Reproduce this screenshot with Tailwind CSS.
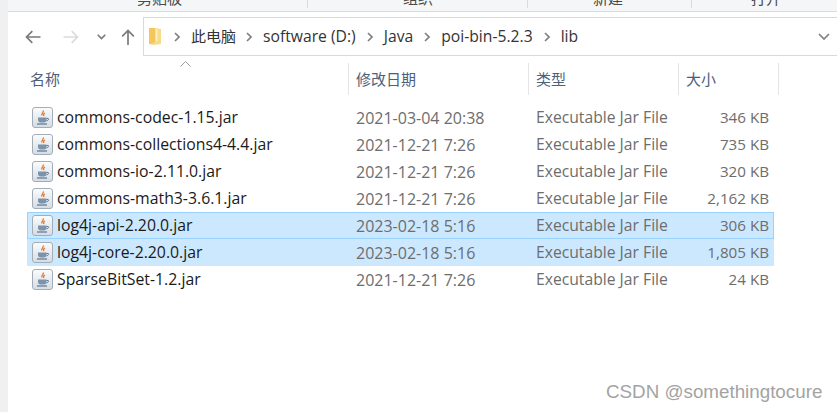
<!DOCTYPE html>
<html lang="en">

<head>
    <meta charset="UTF-8" />
    <title>lib</title>
    <script src="https://cdn.jsdelivr.net/npm/@tailwindcss/browser@4"></script>
</head>

<body class="relative w-[837px] h-[412px] overflow-hidden bg-white flex font-['Open_Sans','Noto_Sans_CJK_SC',sans-serif]">
    <svg width="0" height="0" class="absolute">
        <defs>
            <linearGradient id="jarBg" x1="0" y1="0" x2="0" y2="1">
                <stop offset="0" stop-color="#fbfcfd" />
                <stop offset="1" stop-color="#d5dce4" />
            </linearGradient>
            <symbol id="jar" viewBox="0 0 21 21">
                <rect x="0.5" y="0.5" width="20" height="20" rx="2.5" fill="url(#jarBg)" stroke="#a3adb8" />
                <path d="M11 3.5c1.5 1.8-2.200 2.800-1 5M13 6c-1.600.9-1.800 1.800-1 3" fill="none" stroke="#e2762a" stroke-width="1.300" />
                <path d="M6 10.500h8.500v2.500c0 1.500-1.200 2.500-2.500 2.500h-3.500c-1.500 0-2.500-1-2.500-2.500z" fill="#7d93aa" />
                <path d="M14.500 11.500h1.500c.9 0 .9 2-1.500 2.300" fill="none" stroke="#5b7591" />
                <path d="M5 17h10" stroke="#5b7591" stroke-width="1.200" />
            </symbol>
        </defs>
    </svg>

    <!-- left edge of the window -->
    <div class="w-[8px] shrink-0 bg-[#f0f0f0]"></div>

    <div class="flex-1 flex flex-col min-w-0">
        <!-- ribbon, cut off at the top -->
        <div class="h-[12px] shrink-0 bg-[#f5f6f7] border-b border-[#dadbdc] flex text-[15px] leading-[15px] text-[#4a4a4a] overflow-hidden">
            <div class="w-[300px] h-[8px] border-r border-[#dadbdc] overflow-hidden"><span class="block -mt-[9px] ml-[129px]">剪贴板</span></div>
            <div class="w-[220px] h-[8px] border-r border-[#dadbdc] overflow-hidden"><span class="block -mt-[9px] ml-[95px]">组织</span></div>
            <div class="w-[164px] h-[8px] border-r border-[#dadbdc] overflow-hidden"><span class="block -mt-[9px] ml-[65px]">新建</span></div>
            <div class="w-[145px] h-[8px] overflow-hidden"><span class="block -mt-[9px] ml-[59px]">打开</span></div>
        </div>

        <!-- navigation and address bar -->
        <div class="h-[44px] shrink-0 flex items-center pt-[5px]">
            <div class="w-[135px] shrink-0 relative h-full flex items-center pl-[17px]">
                <svg width="16" height="14" viewBox="0 0 16 14" fill="none" stroke="#7a7a7a" stroke-width="1.700"><path d="M15.500 7H1.500M7.300 1.200 1.500 7l5.800 5.800" /></svg>
                <svg class="ml-[22px]" width="16" height="14" viewBox="0 0 16 14" fill="none" stroke="#dcdcdc" stroke-width="1.700"><path d="M.5 7h14M8.700 1.200 14.500 7l-5.800 5.800" /></svg>
                <svg class="ml-[18px]" width="9" height="6" viewBox="0 0 9 6" fill="none" stroke="#7a7a7a" stroke-width="1.600"><path d="M.7.8 4.500 4.600 8.300.8" /></svg>
                <svg class="ml-[15px]" width="14" height="16" viewBox="0 0 14 16" fill="none" stroke="#7a7a7a" stroke-width="1.700"><path d="M7 16V1.500M1.200 7.300 7 1.500l5.800 5.800" /></svg>
            </div>
            <div class="flex-1 h-[39px] border border-r-0 border-[#d9d9d9] flex items-center text-[15.7px] text-[#333]">
                <svg class="ml-[5px]" width="12" height="17" viewBox="0 0 12 17"><path d="M0 0h7l5 1v15l-7 1-5-1z" fill="#f6dc8b" /><path d="M0 0h6.500v13.500L4 15.500 0 16z" fill="#f3c75c" /><path d="M6.500 0 8.500 2v10.500l-2 1z" fill="#fdf0bd" /></svg>
                <svg class="ml-[13px]" width="6" height="10" viewBox="0 0 6 10" fill="none" stroke="#808080" stroke-width="1.700"><path d="M1 1l4 4-4 4" /></svg>
                <span class="ml-[11px] text-[15px]">此电脑</span>
                <svg class="ml-[10px]" width="6" height="10" viewBox="0 0 6 10" fill="none" stroke="#808080" stroke-width="1.700"><path d="M1 1l4 4-4 4" /></svg>
                <span class="ml-[11px]">software (D:)</span>
                <svg class="ml-[11px]" width="6" height="10" viewBox="0 0 6 10" fill="none" stroke="#808080" stroke-width="1.700"><path d="M1 1l4 4-4 4" /></svg>
                <span class="ml-[11px]">Java</span>
                <svg class="ml-[11px]" width="6" height="10" viewBox="0 0 6 10" fill="none" stroke="#808080" stroke-width="1.700"><path d="M1 1l4 4-4 4" /></svg>
                <span class="ml-[11px]">poi-bin-5.2.3</span>
                <svg class="ml-[11px]" width="6" height="10" viewBox="0 0 6 10" fill="none" stroke="#808080" stroke-width="1.700"><path d="M1 1l4 4-4 4" /></svg>
                <span class="ml-[11px]">lib</span>
                <svg class="ml-auto mr-[7px]" width="12" height="7" viewBox="0 0 12 7" fill="none" stroke="#808080" stroke-width="1.700"><path d="M1 1l5 5 5-5" /></svg>
            </div>
        </div>

        <!-- column headers -->
        <div class="relative h-[32px] mt-[7px] shrink-0 flex text-[15px] text-[#4c607a] leading-[32px]">
            <svg class="absolute left-[172px] -top-[2px]" width="11" height="6" viewBox="0 0 11 6" fill="none" stroke="#9a9a9a"><path d="M.5 5.500 5.500.5l5 5" /></svg>
            <div class="w-[341px] border-r border-[#e5e5e5] pl-[22px]">名称</div>
            <div class="w-[180px] border-r border-[#e5e5e5] pl-[7px]">修改日期</div>
            <div class="w-[150px] border-r border-[#e5e5e5] pl-[7px]">类型</div>
            <div class="w-[100px] border-r border-[#e5e5e5] pl-[7px]">大小</div>
        </div>

        <!-- file rows -->
        <div class="mt-[9px] ml-[19px] w-[747px] flex flex-col text-[#6d6d6d]">
            <div class="h-[27px] flex items-center border border-transparent">
                <svg class="ml-[4px] shrink-0" width="21" height="21"><use href="#jar" /></svg>
                <span class="ml-[4px] w-[299px] text-[15.8px] text-[#1a1a1a]">commons-codec-1.15.jar</span>
                <span class="w-[180px] text-[16px]">2021-03-04 20:38</span>
                <span class="w-[150px] text-[15.7px]">Executable Jar File</span>
                <span class="w-[83px] text-right text-[15.2px]">346 KB</span>
            </div>
            <div class="h-[27px] flex items-center border border-transparent">
                <svg class="ml-[4px] shrink-0" width="21" height="21"><use href="#jar" /></svg>
                <span class="ml-[4px] w-[299px] text-[15.8px] text-[#1a1a1a]">commons-collections4-4.4.jar</span>
                <span class="w-[180px] text-[16px]">2021-12-21 7:26</span>
                <span class="w-[150px] text-[15.7px]">Executable Jar File</span>
                <span class="w-[83px] text-right text-[15.2px]">735 KB</span>
            </div>
            <div class="h-[27px] flex items-center border border-transparent">
                <svg class="ml-[4px] shrink-0" width="21" height="21"><use href="#jar" /></svg>
                <span class="ml-[4px] w-[299px] text-[15.8px] text-[#1a1a1a]">commons-io-2.11.0.jar</span>
                <span class="w-[180px] text-[16px]">2021-12-21 7:26</span>
                <span class="w-[150px] text-[15.7px]">Executable Jar File</span>
                <span class="w-[83px] text-right text-[15.2px]">320 KB</span>
            </div>
            <div class="h-[27px] flex items-center border border-transparent">
                <svg class="ml-[4px] shrink-0" width="21" height="21"><use href="#jar" /></svg>
                <span class="ml-[4px] w-[299px] text-[15.8px] text-[#1a1a1a]">commons-math3-3.6.1.jar</span>
                <span class="w-[180px] text-[16px]">2021-12-21 7:26</span>
                <span class="w-[150px] text-[15.7px]">Executable Jar File</span>
                <span class="w-[83px] text-right text-[15.2px]">2,162 KB</span>
            </div>
            <div class="h-[27px] flex items-center border border-[#99d1ff] bg-[#cce8ff]">
                <svg class="ml-[4px] shrink-0" width="21" height="21"><use href="#jar" /></svg>
                <span class="ml-[4px] w-[299px] text-[15.8px] text-[#1a1a1a]">log4j-api-2.20.0.jar</span>
                <span class="w-[180px] text-[16px]">2023-02-18 5:16</span>
                <span class="w-[150px] text-[15.7px]">Executable Jar File</span>
                <span class="w-[83px] text-right text-[15.2px]">306 KB</span>
            </div>
            <div class="h-[27px] flex items-center border border-[#cce8ff] bg-[#cce8ff]">
                <svg class="ml-[4px] shrink-0" width="21" height="21"><use href="#jar" /></svg>
                <span class="ml-[4px] w-[299px] text-[15.8px] text-[#1a1a1a]">log4j-core-2.20.0.jar</span>
                <span class="w-[180px] text-[16px]">2023-02-18 5:16</span>
                <span class="w-[150px] text-[15.7px]">Executable Jar File</span>
                <span class="w-[83px] text-right text-[15.2px]">1,805 KB</span>
            </div>
            <div class="h-[27px] flex items-center border border-transparent">
                <svg class="ml-[4px] shrink-0" width="21" height="21"><use href="#jar" /></svg>
                <span class="ml-[4px] w-[299px] text-[15.8px] text-[#1a1a1a]">SparseBitSet-1.2.jar</span>
                <span class="w-[180px] text-[16px]">2021-12-21 7:26</span>
                <span class="w-[150px] text-[15.7px]">Executable Jar File</span>
                <span class="w-[83px] text-right text-[15.2px]">24 KB</span>
            </div>
        </div>
    </div>

    <!-- watermark -->
    <div class="absolute left-[606px] top-[381px] text-[18.8px] leading-[22px] text-[#a3a3a3] font-['Liberation_Sans',sans-serif]">CSDN @somethingtocure</div>
</body>

</html>
